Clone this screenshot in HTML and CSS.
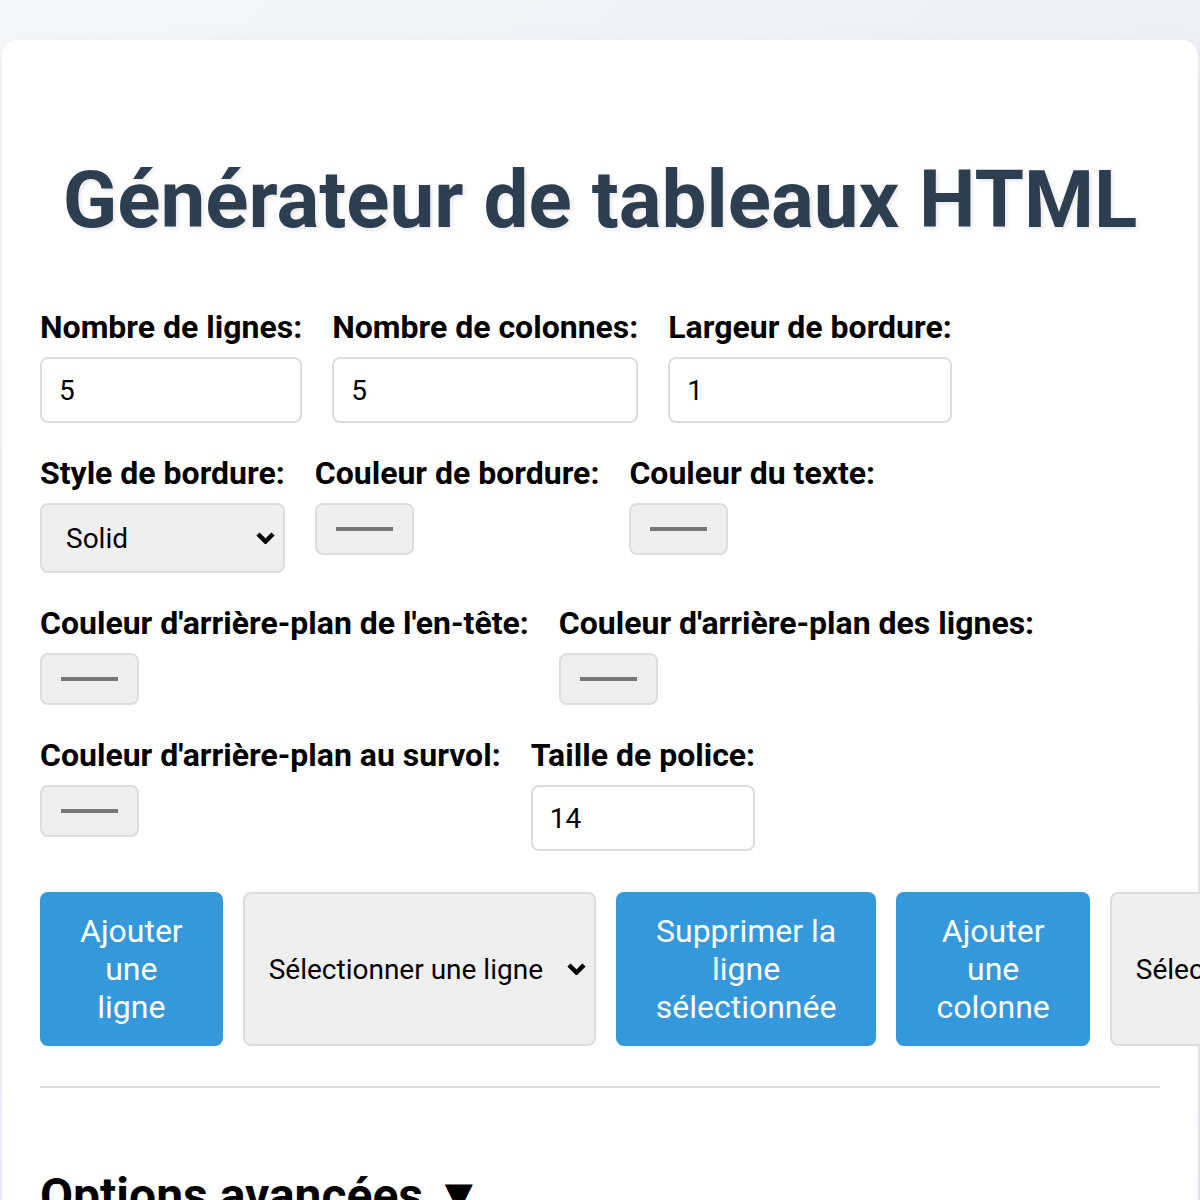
FILE: index.html
```html
<!DOCTYPE html>
<html lang="fr">
<head>
  <meta charset="UTF-8">
  <title>Générateur de tableaux HTML</title>
  <link rel="stylesheet" href="styles.css">
</head>
<body>
  <div class="container">
    <h1>Générateur de tableaux HTML</h1>

    <!-- DIMENSIONS -->
    <div class="row">
      <div class="field">
        <label for="rows">Nombre de lignes:</label>
        <input type="number" id="rows" class="stretch" value="5">
      </div>
      <div class="field">
        <label for="cols">Nombre de colonnes:</label>
        <input type="number" id="cols" class="stretch" value="5">
      </div>
      <div class="field">
        <label for="borderWidth">Largeur de bordure:</label>
        <input type="number" id="borderWidth" class="stretch" value="1">
      </div>
    </div>

    <!-- BORDER AND TEXT -->
    <div class="row">
      <div class="field">
        <label for="borderStyle">Style de bordure:</label>
        <select id="borderStyle" class="stretch">
          <option value="solid" selected>Solid</option>
          <option value="dashed">Dashed</option>
          <option value="dotted">Dotted</option>
          <option value="double">Double</option>
        </select>
      </div>
      <div class="field">
        <label for="borderColor">Couleur de bordure:</label>
        <input type="color" id="borderColor">
      </div>
      <div class="field">
        <label for="textColor">Couleur du texte:</label>
        <input type="color" id="textColor">
      </div>
    </div>

    <!-- BACKGROUNDS -->
    <div class="row">
      <div class="field">
        <label for="headerBg">Couleur d'arrière-plan de l'en-tête:</label>
        <input type="color" id="headerBg">
      </div>
      <div class="field">
        <label for="rowBg">Couleur d'arrière-plan des lignes:</label>
        <input type="color" id="rowBg">
      </div>
    </div>

    <div class="row">
      <div class="field">
        <label for="hoverBg">Couleur d'arrière-plan au survol:</label>
        <input type="color" id="hoverBg">
      </div>
      <div class="field">
        <label for="fontSize">Taille de police:</label>
        <input type="number" id="fontSize" class="stretch" value="14">
      </div>
    </div>

    <!-- ROW / COLUMN ACTIONS -->
    <div class="actions">
      <button id="addRow">Ajouter une ligne</button>
      <select id="rowSelect">
        <option value="">Sélectionner une ligne</option>
      </select>
      <button id="deleteRow">Supprimer la ligne sélectionnée</button>
      <button id="addCol">Ajouter une colonne</button>
      <select id="colSelect">
        <option value="">Sélectionner une colonne</option>
      </select>
      <button id="deleteCol">Supprimer la colonne sélectionnée</button>
    </div>

    <hr>

    <h2 class="advanced">Options avancées ▼</h2>
  </div>
</body>
</html>
```

FILE: styles.css
```css
body {
  margin: 0;
  font-family: Roboto, "Liberation Sans", sans-serif;
  background: linear-gradient(135deg, #f5f7fa 0%, #e4e8f2 100%);
  min-height: 100vh;
}

.container {
  margin: 40px 2px 0;
  padding: 40px 38px;
  background-color: #fff;
  border-radius: 16px;
  box-shadow: 0 10px 30px rgba(0, 0, 0, 0.06);
  min-height: 1200px;
}

h1 {
  margin: 73px 0 61px;
  text-align: center;
  font-size: 80px;
  font-weight: 700;
  color: #2c3e50;
  text-shadow: 2px 2px 4px rgba(0, 0, 0, 0.1);
}

.row {
  display: flex;
  gap: 30px;
  margin-bottom: 31px;
}

.field {
  display: flex;
  flex-direction: column;
  align-items: flex-start;
}

.field label {
  font-size: 32px;
  font-weight: 700;
  margin-bottom: 11px;
  white-space: nowrap;
}

.stretch {
  width: 0;
  min-width: 100%;
  box-sizing: border-box;
}

input[type="number"] {
  height: 66px;
  padding: 0 17px;
  border: 2px solid #ddd;
  border-radius: 8px;
  font-family: inherit;
  font-size: 28px;
  background-color: #fff;
  -moz-appearance: textfield;
}

input[type="number"]::-webkit-inner-spin-button,
input[type="number"]::-webkit-outer-spin-button {
  -webkit-appearance: none;
  margin: 0;
}

select {
  -webkit-appearance: none;
  appearance: none;
  height: 70px;
  padding: 0 50px 0 24px;
  border: 2px solid #ddd;
  border-radius: 8px;
  font-family: inherit;
  font-size: 28px;
  color: #000;
  background-color: #efefef;
  background-image: url("data:image/svg+xml;utf8,<svg xmlns='http://www.w3.org/2000/svg' width='19' height='12' viewBox='0 0 19 12'><path d='M2 2l7.5 7.5 7.5-7.5' fill='none' stroke='black' stroke-width='4.5'/></svg>");
  background-repeat: no-repeat;
  background-position: right 8px center;
}

input[type="color"] {
  -webkit-appearance: none;
  width: 99px;
  height: 52px;
  padding: 0;
  border: 2px solid #ddd;
  border-radius: 8px;
  background-color: #efefef;
  cursor: pointer;
}

input[type="color"]::-webkit-color-swatch-wrapper {
  padding: 22px 19px;
}

input[type="color"]::-webkit-color-swatch {
  border: none;
  border-radius: 0;
  background-color: #777 !important;
}

.actions {
  display: flex;
  gap: 20px;
  margin-top: 41px;
}

.actions button {
  flex-shrink: 1;
  min-width: min-content;
  padding: 20px 40px;
  border: none;
  border-radius: 8px;
  background-color: #3498db;
  color: #fff;
  font-family: inherit;
  font-size: 32px;
  line-height: 38px;
  cursor: pointer;
}

.actions button:hover {
  background-color: #2980b9;
}

.actions select {
  flex-shrink: 0;
  height: auto;
}

hr {
  margin: 40px 0 0;
  border: none;
  border-top: 2px solid #ddd;
}

.advanced {
  margin: 79px 0 0;
  font-size: 48px;
  font-weight: 700;
  cursor: pointer;
}
```
